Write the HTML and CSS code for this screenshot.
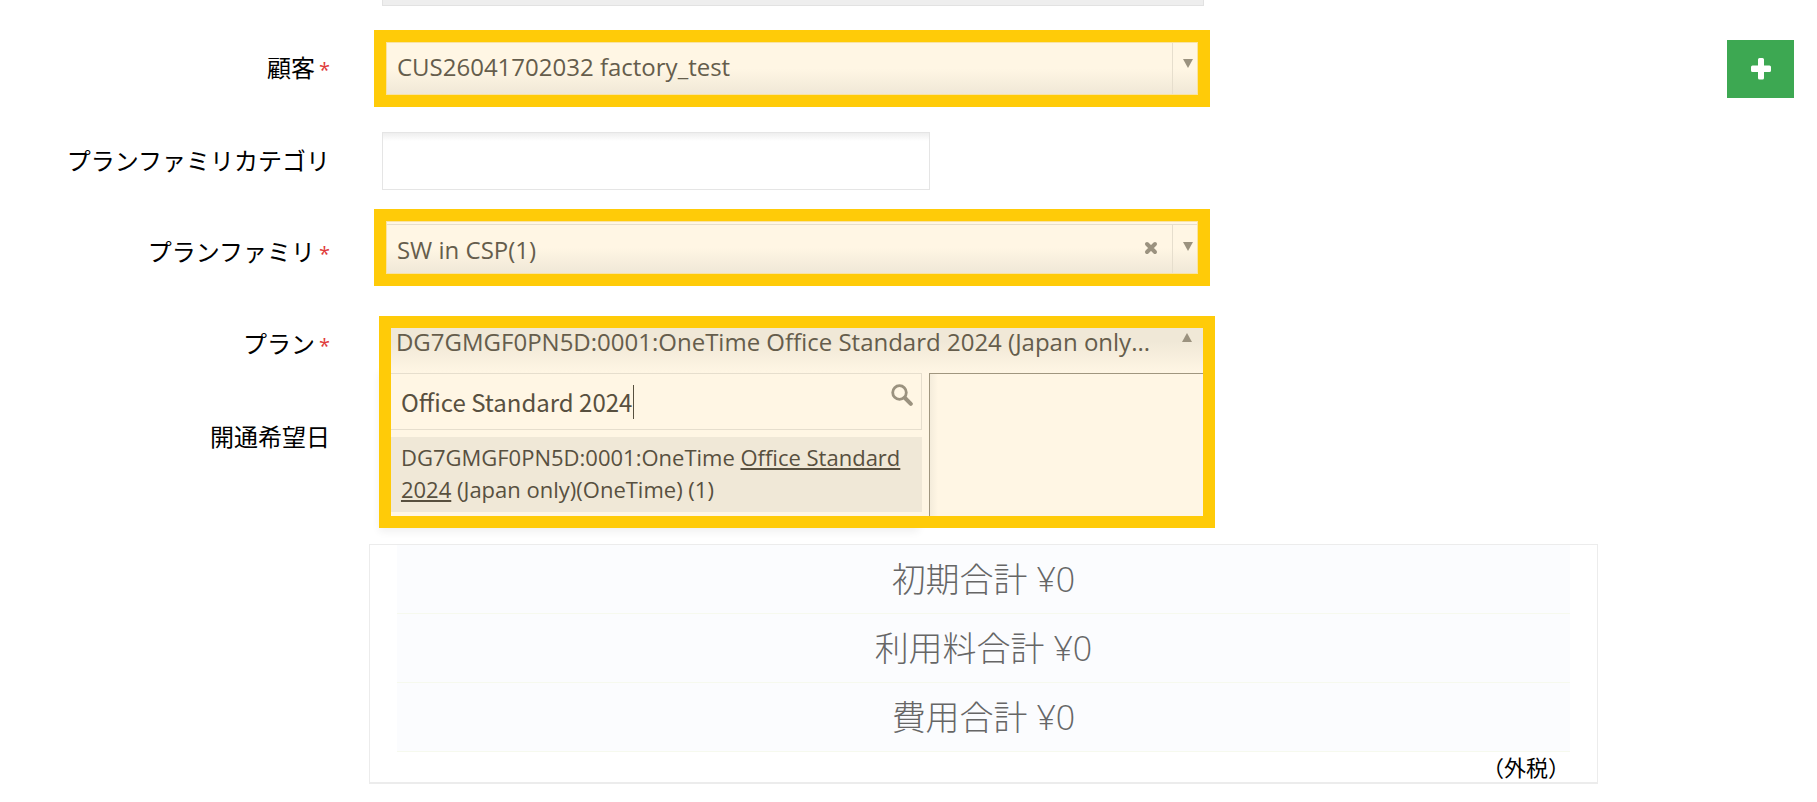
FILE: index.html
```
<!DOCTYPE html>
<html lang="ja">
<head>
<meta charset="utf-8">
<title>注文</title>
<link rel="stylesheet" href="styles.css">
</head>
<body>
<main class="page">
  <div class="previous-field"></div>
  <form class="form">
    <label class="label" for="customer">顧客<span class="required">*</span></label>
    <div class="field highlight customer">
      <div class="picker">
        <select class="picker-select" id="customer"><option>CUS26041702032 factory_test</option></select>
        <span class="picker-arrow"><svg width="10" height="9" viewBox="0 0 10 9"><path d="M0 0h10L5 9z" fill="#9b927f"/></svg></span>
      </div>
    </div>
    <button class="add" type="button" aria-label="追加"><svg width="20" height="22" viewBox="0 0 20 22"><path d="M8.500 0h3a1.500 1.500 0 0 1 1.500 1.500V7.500h5.500A1.500 1.500 0 0 1 20 9v3.500a1.500 1.500 0 0 1-1.500 1.500H13v6a1.500 1.500 0 0 1-1.500 1.500h-3A1.500 1.500 0 0 1 7 20v-6H1.500A1.500 1.500 0 0 1 0 12.500V9a1.500 1.500 0 0 1 1.500-1.500H7v-6A1.500 1.500 0 0 1 8.500 0z" fill="#fff"/></svg></button>

    <label class="label row-2" for="category">プランファミリカテゴリ</label>
    <input class="field text-input" id="category" type="text">

    <label class="label row-3" for="family">プランファミリ<span class="required">*</span></label>
    <div class="field highlight family">
      <div class="picker picker-low">
        <select class="picker-select" id="family"><option>SW in CSP(1)</option></select>
        <button class="picker-clear" type="button" aria-label="クリア"><svg width="14" height="14" viewBox="0 0 14 14"><path d="M3 3l8 8M11 3l-8 8" stroke="#9b927f" stroke-width="4" stroke-linecap="round"/></svg></button>
        <span class="picker-arrow"><svg width="10" height="9" viewBox="0 0 10 9"><path d="M0 0h10L5 9z" fill="#9b927f"/></svg></span>
      </div>
    </div>

    <label class="label row-4" for="plan">プラン<span class="required">*</span></label>
    <label class="label row-5" for="date">開通希望日</label>
    <div class="field highlight plan">
      <button class="plan-current" id="plan" type="button">
        <span class="plan-name">DG7GMGF0PN5D:0001:OneTime Office Standard 2024 (Japan only...</span>
        <svg class="plan-arrow" width="10" height="9" viewBox="0 0 10 9"><path d="M5 0l5 9H0z" fill="#9b927f"/></svg>
      </button>
      <div class="plan-body">
        <div class="plan-list">
          <div class="search">
            <input class="search-input" type="text" aria-label="プラン検索" value="Office Standard 2024">
            <span class="search-caret"></span>
            <svg class="search-icon" width="22" height="22" viewBox="0 0 22 22" fill="none" stroke="#9b927f" stroke-linecap="round"><circle cx="8.500" cy="8.500" r="6.800" stroke-width="2.800"/><path d="M14 14l5.800 5.800" stroke-width="4"/></svg>
          </div>
          <div class="result">DG7GMGF0PN5D:0001:OneTime <u>Office Standard 2024</u> (Japan only)(OneTime) (1)</div>
        </div>
        <input class="date-input" id="date" type="text">
      </div>
    </div>
  </form>
  <section class="totals">
    <div class="total">初期合計 ¥0</div>
    <div class="total">利用料合計 ¥0</div>
    <div class="total">費用合計 ¥0</div>
    <div class="tax">（外税）</div>
  </section>
</main>
</body>
</html>
```
FILE: styles.css
```
* { box-sizing: border-box; }
body {
  margin: 0;
  background: #fff;
  color: #000;
  font-family: "Open Sans", "Noto Sans CJK JP", sans-serif;
  font-size: 24px;
}
input, select, button { font: inherit; color: inherit; border-radius: 0; }
svg { display: block; }
.previous-field {
  height: 6px;
  width: 45.25%;
  margin: 0 0 17px 21.02%;
  background: #eee;
  border: solid #e2e2e2;
  border-width: 0 1px 1px;
}
.form {
  display: grid;
  grid-template-columns: 18.16% 46% 1fr;
  grid-template-rows: repeat(5, 92px) auto;
  column-gap: 44px;
  align-items: center;
}
.label {
  grid-column: 1;
  grid-row: 1;
  text-align: right;
  white-space: nowrap;
  line-height: 36px;
}
.row-2 { grid-row: 2; }
.row-3 { grid-row: 3; }
.row-4 { grid-row: 4; }
.row-5 { grid-row: 5; }
.required { color: #e03a3a; margin-left: 4px; font-size: 20px; }
.field { grid-column: 2; grid-row: 1; min-width: 0; }
.highlight { border: 12px solid #ffcb08; color: #655d4c; }
.customer { align-self: start; margin-top: 7px; }
.picker {
  position: relative;
  height: 53px;
  background: linear-gradient(#fff6e4 50%, #f0e8d7);
  border: 1px solid #f9e3a3;
}
.picker-select {
  display: block;
  width: 100%;
  height: 100%;
  padding: 0 60px 5px 10px;
  border: 0;
  appearance: none;
  background: none;
}
.picker-arrow {
  position: absolute;
  top: 0;
  right: 0;
  bottom: 0;
  width: 25px;
  padding: 16px 0 0 10px;
  border-left: 1px solid #e6decd;
  pointer-events: none;
}
.picker-clear {
  position: absolute;
  top: 19px;
  right: 39px;
  padding: 0;
  border: 0;
  background: none;
}
.family { grid-row: 3; align-self: start; margin-top: 2px; }
.picker-low { padding-top: 2px; }
.picker-low::before {
  content: "";
  position: absolute;
  inset: 2px 0 auto;
  border-top: 1px solid #e6decd;
}
.picker-low .picker-select { padding: 1px 60px 0 10px; }
.picker-low .picker-arrow { top: 3px; padding-top: 17px; }
.add {
  grid-column: 3;
  grid-row: 1;
  justify-self: end;
  width: 67px;
  height: 58px;
  margin-right: 23px;
  display: grid;
  place-items: center;
  border: 0;
  background: #3da852;
}
.text-input {
  grid-row: 2;
  width: 65.6%;
  height: 58px;
  margin-left: 8px;
  padding: 0 10px;
  border: 1px solid #e5e5e5;
  background: linear-gradient(#eee, #fff 8px);
}
.plan {
  position: relative;
  grid-row: 4 / span 3;
  align-self: start;
  margin: 17px -5px 16px 5px;
  background: #fff6e4;
}
.plan::before {
  content: "";
  position: absolute;
  z-index: -1;
  inset: 40px 35% -12px -12px;
  box-shadow: 0 4px 8px rgba(0, 0, 0, 0.06);
}
.plan-current {
  display: flex;
  width: 100%;
  height: 45px;
  padding: 0 11px 0 5px;
  border: 0;
  background: linear-gradient(#f0e8d7 30%, #fff6e4);
  text-align: left;
}
.plan-name {
  flex: 1;
  min-width: 0;
  white-space: nowrap;
  line-height: 28px;
}
.plan-arrow { margin-top: 5px; }
.plan-body {
  display: grid;
  grid-template-columns: minmax(0, 531fr) minmax(0, 274fr);
  column-gap: 7px;
}
.plan-list { padding-bottom: 4px; }
.search {
  position: relative;
  height: 57px;
  margin-bottom: 7px;
  border: solid #e6decd;
  border-width: 1px 1px 1px 0;
}
.search-input {
  display: block;
  width: 100%;
  height: 100%;
  padding: 0 50px 0 10px;
  border: 0;
  background: none;
  color: #58503f;
  font-family: "Noto Sans CJK JP", sans-serif;
}
.search-caret {
  position: absolute;
  top: 11px;
  left: 242px;
  width: 1px;
  height: 34px;
  background: #58503f;
}
.search-icon { position: absolute; top: 10px; right: 8px; }
.result {
  padding: 4px 10px 7px;
  background: #f0e8d7;
  color: #58503f;
  font-size: 22px;
  line-height: 32px;
}
.date-input {
  width: 100%;
  height: 100%;
  border: solid #a0967f;
  border-width: 1px 0 0 1px;
  background: linear-gradient(90deg, #f4ecdb, #fff6e4 8px);
}
.totals {
  margin: 0 12.05% 0 20.3%;
  padding: 0 27px;
  border: 1px solid #ececec;
  border-bottom-width: 2px;
}
.total {
  border-bottom: 1px solid #f6f9ee;
  background: #fbfcfe;
  color: #666;
  font-size: 34px;
  font-weight: 300;
  line-height: 68px;
  text-align: center;
}
.total:first-child { padding-top: 1px; line-height: 67px; }
.tax { text-align: right; font-size: 22px; line-height: 30px; }
```
